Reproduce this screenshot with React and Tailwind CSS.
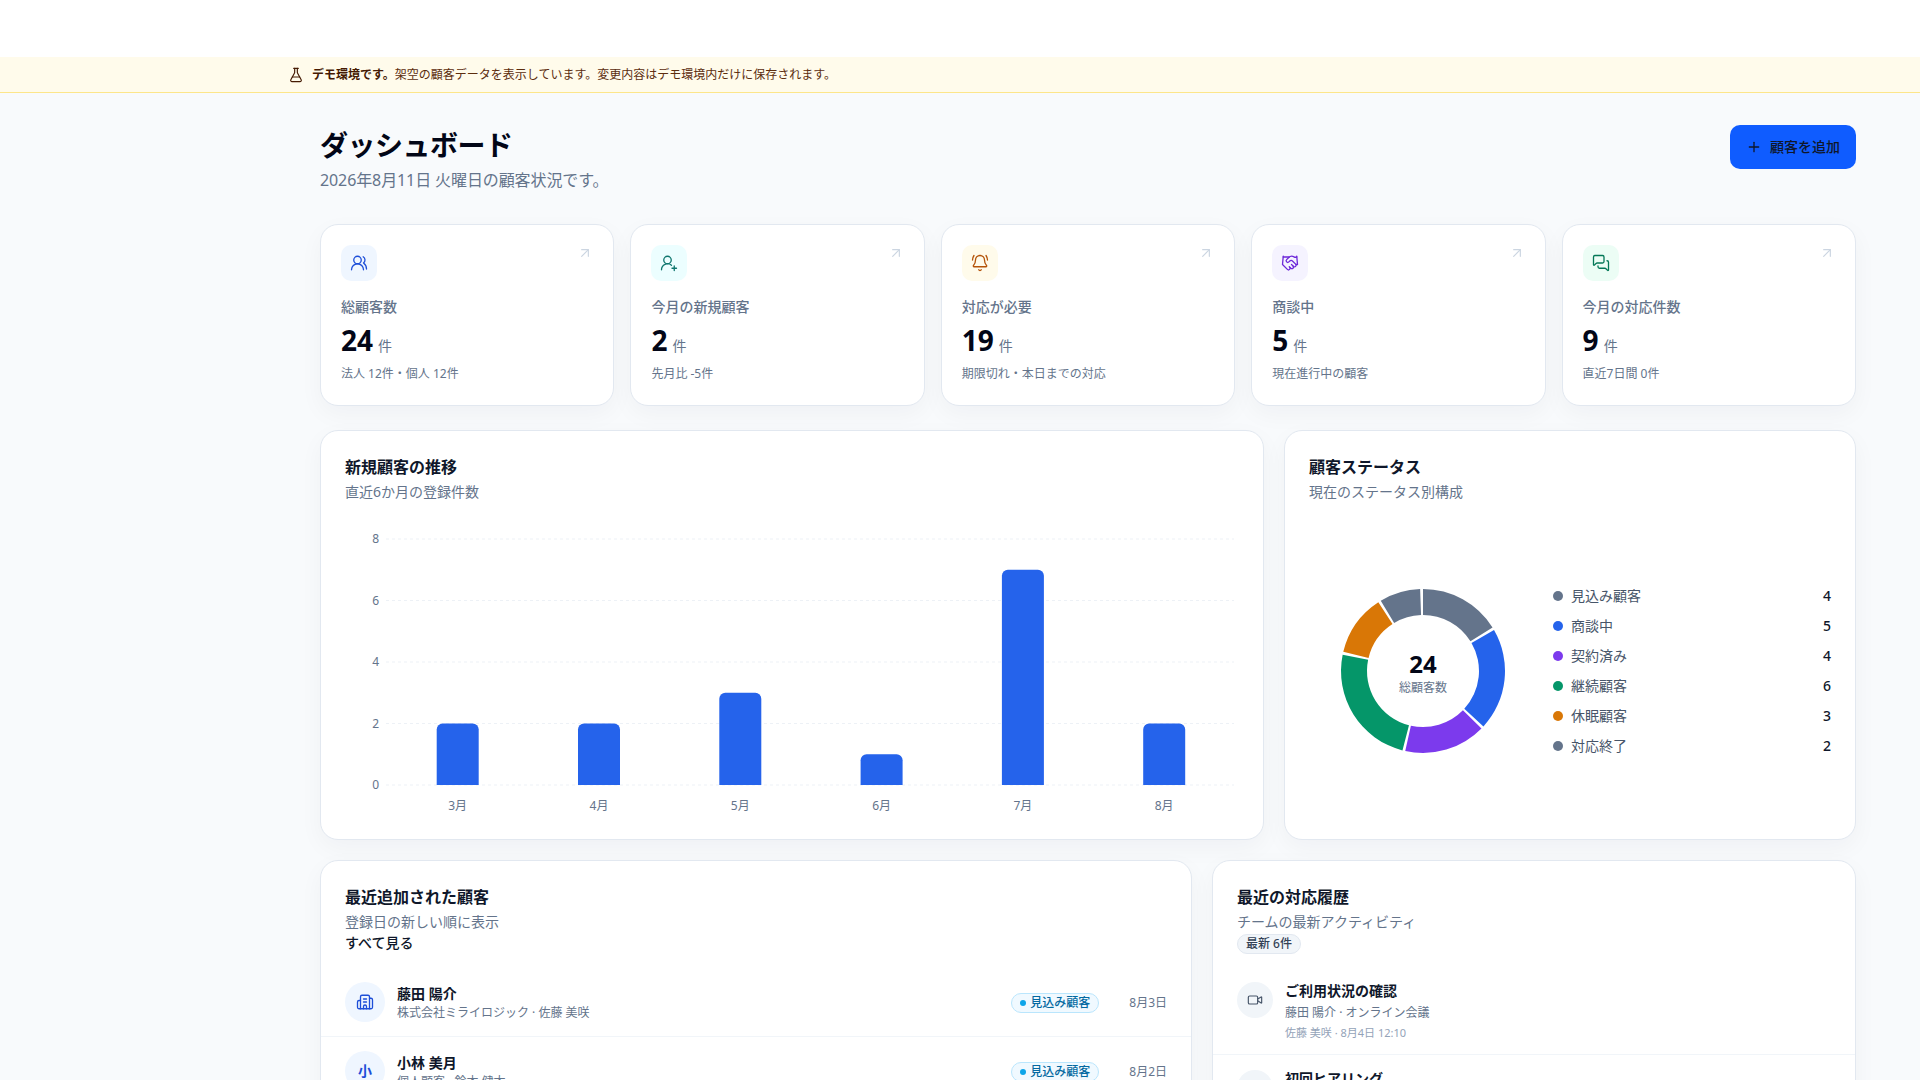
import React from "react";
import { UsersRound, UserRoundPlus, BellRing, Handshake, MessagesSquare, ArrowUpRight, FlaskConical, Plus, Building2, Video } from "lucide-react";

const stats = [
  { icon: UsersRound, bg: "bg-[#eff6ff]", fg: "text-[#1d4ed8]", label: "総顧客数", value: "24", sub: "法人 12件・個人 12件" },
  { icon: UserRoundPlus, bg: "bg-[#ecfeff]", fg: "text-[#0f766e]", label: "今月の新規顧客", value: "2", sub: "先月比 -5件" },
  { icon: BellRing, bg: "bg-[#fffbeb]", fg: "text-[#b45309]", label: "対応が必要", value: "19", sub: "期限切れ・本日までの対応" },
  { icon: Handshake, bg: "bg-[#f5f3ff]", fg: "text-[#6d28d9]", label: "商談中", value: "5", sub: "現在進行中の顧客" },
  { icon: MessagesSquare, bg: "bg-[#ecfdf5]", fg: "text-[#047857]", label: "今月の対応件数", value: "9", sub: "直近7日間 0件" },
];

const card = "bg-white border border-[#e2e8f0] rounded-[18px] shadow-[0_8px_24px_rgba(15,23,42,0.04)]";

function StatCard({ s }) {
  const Icon = s.icon;
  return (
    <div className={`${card} p-5 h-[182px]`}>
      <div className="flex items-start justify-between">
        <div className={`w-9 h-9 rounded-[10px] flex items-center justify-center ${s.bg} ${s.fg}`}>
          <Icon size={18} strokeWidth={1.75} />
        </div>
        <ArrowUpRight size={16} strokeWidth={1.75} className="text-[#cbd5e1]" />
      </div>
      <div className="mt-4 text-sm leading-5 text-[#64748b] font-medium">{s.label}</div>
      <div className="mt-[7px] flex items-baseline gap-[5px] h-8">
        <span className="text-[28px] leading-8 font-bold text-[#020617]">{s.value}</span>
        <span className="text-sm text-[#64748b]">件</span>
      </div>
      <div className="mt-[10px] text-xs leading-4 text-[#64748b]">{s.sub}</div>
    </div>
  );
}

function CardHead({ title, sub }) {
  return (
    <>
      <div className="text-base leading-6 font-semibold text-[#0f172a]">{title}</div>
      <div className="mt-[3px] text-sm leading-5 text-[#64748b]">{sub}</div>
    </>
  );
}

function BarChart() {
  const grid = [[8, 13], [6, 74.5], [4, 136], [2, 197.5], [0, 259]];
  const bars = [2, 2, 3, 1, 7, 2];
  const months = ["3月", "4月", "5月", "6月", "7月", "8月"];
  const unit = 30.75;
  return (
    <svg viewBox="0 0 894 290" className="w-[894px] h-[290px] mt-6">
      {grid.map(([v, y]) => (
        <g key={v}>
          <line x1="41" x2="889" y1={y} y2={y} stroke="#edf1f6" strokeDasharray="3 3" />
          <text x="34" y={y + 4} textAnchor="end" fontSize="12" fill="#64748b">{v}</text>
        </g>
      ))}
      {bars.map((b, i) => {
        const cx = 112.7 + i * 141.3;
        const h = b * unit;
        const x = cx - 21;
        const y = 259 - h;
        return (
          <g key={i}>
            <path d={`M${x} 259V${y + 6}a6 6 0 0 1 6 -6h30a6 6 0 0 1 6 6V259Z`} fill="#2563eb" />
            <text x={cx} y="284" textAnchor="middle" fontSize="12" fill="#64748b">{months[i]}</text>
          </g>
        );
      })}
    </svg>
  );
}

const segs = [
  { label: "見込み顧客", v: 4, c: "#64748b", dot: "bg-[#64748b]" },
  { label: "商談中", v: 5, c: "#2563eb", dot: "bg-[#2563eb]" },
  { label: "契約済み", v: 4, c: "#7c3aed", dot: "bg-[#7c3aed]" },
  { label: "継続顧客", v: 6, c: "#059669", dot: "bg-[#059669]" },
  { label: "休眠顧客", v: 3, c: "#d97706", dot: "bg-[#d97706]" },
  { label: "対応終了", v: 2, c: "#64748b", dot: "bg-[#64748b]" },
];

function polar(r, deg) {
  const a = (deg * Math.PI) / 180;
  return [100 + r * Math.sin(a), 100 - r * Math.cos(a)];
}

function Donut() {
  let angle = 0;
  const R = 82, r = 56;
  return (
    <div className="relative w-[228px] h-[200px] flex items-center justify-center shrink-0">
      <svg viewBox="0 0 200 200" className="w-[200px] h-[200px]">
        {segs.map((s) => {
          const sweep = (348 * s.v) / 24;
          const a0 = angle;
          const a1 = angle + sweep;
          angle = a1 + 2;
          const [x0, y0] = polar(R, a0);
          const [x1, y1] = polar(R, a1);
          const [x2, y2] = polar(r, a1);
          const [x3, y3] = polar(r, a0);
          return (
            <path
              key={s.label}
              fill={s.c}
              d={`M${x0} ${y0}A${R} ${R} 0 0 1 ${x1} ${y1}L${x2} ${y2}A${r} ${r} 0 0 0 ${x3} ${y3}Z`}
            />
          );
        })}
      </svg>
      <div className="absolute inset-0 flex flex-col items-center justify-center pt-1">
        <div className="text-2xl leading-7 font-bold text-[#020617]">24</div>
        <div className="text-xs leading-4 text-[#64748b] mt-[2px]">総顧客数</div>
      </div>
    </div>
  );
}

function StatusCard() {
  return (
    <div className={`${card} px-6 pt-6 pb-[23px]`}>
      <CardHead title="顧客ステータス" sub="現在のステータス別構成" />
      <div className="mt-6 h-[290px] flex items-center gap-4">
        <Donut />
        <div className="flex-1 flex flex-col gap-[10px]">
          {segs.map((s) => (
            <div key={s.label} className="flex items-center h-5 text-sm">
              <span className={`w-[10px] h-[10px] rounded-full ${s.dot}`} />
              <span className="ml-[8px] text-[#475569]">{s.label}</span>
              <span className="ml-auto font-medium text-[#0f172a]">{s.v}</span>
            </div>
          ))}
        </div>
      </div>
    </div>
  );
}

function Badge() {
  return (
    <span className="mt-[2px] inline-flex items-center h-5 px-2 gap-1 rounded-full border border-[#bae6fd] bg-[#f0f9ff] text-xs font-medium text-[#0369a1]">
      <span className="w-[6px] h-[6px] rounded-full bg-[#0ea5e9]" />
      見込み顧客
    </span>
  );
}

function CustomerRow({ avatar, name, sub, date, last }) {
  return (
    <div className={`flex items-center h-[69px] px-6 ${last ? "" : "border-b border-[#f1f5f9]"}`}>
      <div className="w-10 h-10 rounded-full bg-[#eff6ff] text-[#1d4ed8] flex items-center justify-center text-sm font-semibold shrink-0">{avatar}</div>
      <div className="ml-3 flex-1">
        <div className="text-sm leading-5 font-semibold text-[#0f172a]">{name}</div>
        <div className="mt-px text-xs leading-4 text-[#64748b]">{sub}</div>
      </div>
      <Badge />
      <div className="mt-[2px] ml-[30px] text-xs text-[#64748b]">{date}</div>
    </div>
  );
}

export default function App() {
  return (
    <div className="h-screen overflow-hidden bg-[#f8fafc]" style={{ fontFamily: '"Noto Sans", "Noto Sans CJK JP", sans-serif' }}>
      <div className="h-[57px] bg-white" />
      <div className="h-9 bg-[#fffbeb] border-b border-[#fde68a] flex items-center pl-[288px] text-xs text-[#5c2d0e]">
        <FlaskConical size={16} strokeWidth={1.75} className="text-[#451a03]" />
        <span className="ml-2 mt-px"><b className="font-bold text-[#451a03]">デモ環境です。</b>架空の顧客データを表示しています。変更内容はデモ環境内だけに保存されます。</span>
      </div>
      <main className="pl-[320px] pr-[64px] pt-[31px]">
        <div className="flex items-start justify-between h-[100px]">
          <div>
            <h1 className="text-[28px] leading-10 font-bold tracking-[-0.5px] text-[#020617] translate-y-px">ダッシュボード</h1>
            <p className="mt-1 text-base leading-6 tracking-[-0.1px] text-[#64748b]">2026年8月11日 火曜日の顧客状況です。</p>
          </div>
          <button className="mt-px h-11 w-[126px] rounded-[10px] bg-[#0f5cff] flex items-center justify-center gap-2 text-sm font-medium text-[#0f172a]">
            <Plus size={16} strokeWidth={2} />
            顧客を追加
          </button>
        </div>
        <div className="grid grid-cols-5 gap-4">
          {stats.map((s) => <StatCard key={s.label} s={s} />)}
        </div>
        <div className="mt-6 grid grid-cols-[944px_1fr] gap-5">
          <div className={`${card} px-6 pt-6 pb-[23px]`}>
            <CardHead title="新規顧客の推移" sub="直近6か月の登録件数" />
            <BarChart />
          </div>
          <StatusCard />
        </div>
        <div className="mt-5 grid grid-cols-[872px_1fr] gap-5">
          <div className={`${card}`}>
            <div className="px-6 pt-6 pb-[15px]">
              <CardHead title="最近追加された顧客" sub="登録日の新しい順に表示" />
              <div className="text-sm leading-5 font-medium text-[#0f172a] mt-px">すべて見る</div>
            </div>
            <CustomerRow avatar={<Building2 size={18} strokeWidth={1.75} />} name="藤田 陽介" sub="株式会社ミライロジック · 佐藤 美咲" date="8月3日" />
            <CustomerRow avatar="小" name="小林 美月" sub="個人顧客 · 鈴木 健太" date="8月2日" />
          </div>
          <div className={`${card}`}>
            <div className="px-6 pt-6 pb-[13px]">
              <CardHead title="最近の対応履歴" sub="チームの最新アクティビティ" />
              <span className="mt-[2px] flex w-fit items-center h-5 px-2 rounded-full border border-[#e2e8f0] bg-[#f1f5f9] text-xs font-medium text-[#334155]">最新 6件</span>
            </div>
            <div className="flex items-start px-6 pt-[15px] h-[88px] border-b border-[#f1f5f9]">
              <div className="w-9 h-9 rounded-full bg-[#f1f5f9] text-[#475569] flex items-center justify-center shrink-0">
                <Video size={16} strokeWidth={1.75} />
              </div>
              <div className="ml-3 -mt-[1px]">
                <div className="text-sm leading-5 font-semibold text-[#0f172a]">ご利用状況の確認</div>
                <div className="text-xs leading-5 mt-[2px] text-[#64748b]">藤田 陽介 · オンライン会議</div>
                <div className="text-[11px] leading-5 text-[#94a3b8]">佐藤 美咲 · 8月4日 12:10</div>
              </div>
            </div>
            <div className="flex items-start px-6 pt-[15px] h-[88px]">
              <div className="w-9 h-9 rounded-full bg-[#f1f5f9] text-[#475569] flex items-center justify-center shrink-0">
                <Video size={16} strokeWidth={1.75} />
              </div>
              <div className="ml-3 -mt-[1px]">
                <div className="text-sm leading-5 font-semibold text-[#0f172a]">初回ヒアリング</div>
              </div>
            </div>
          </div>
        </div>
      </main>
    </div>
  );
}
